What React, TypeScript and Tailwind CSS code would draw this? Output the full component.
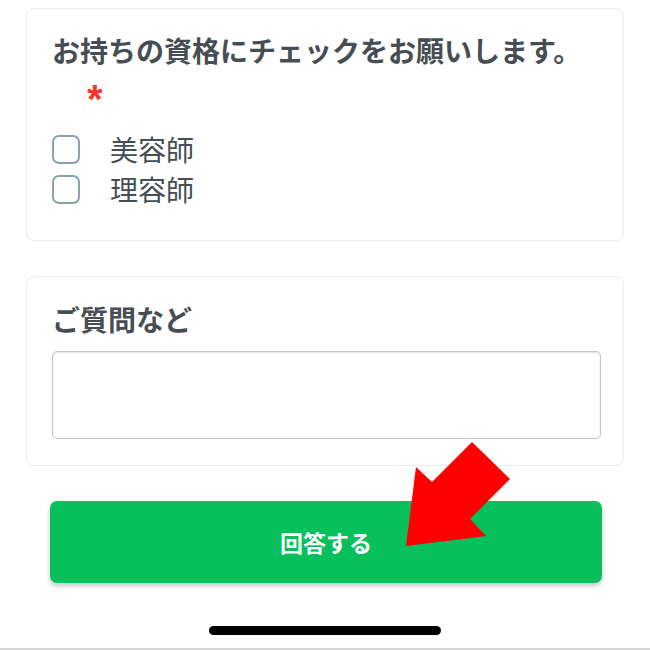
import React from 'react';

// ============================================================================
// Parts
// ============================================================================

function CheckRow({ label }: { label: string }) {
  return (
    <label className="flex items-center h-[40px]">
      <span className="w-[28px] h-[29px] rounded-[7px] border-2 border-[#8aa3aa] bg-white shrink-0" />
      <span className="ml-[30px] text-[28px] leading-[40px] text-[#464e53]">{label}</span>
    </label>
  );
}

function Arrow() {
  return (
    <svg
      className="absolute left-0 top-0 pointer-events-none"
      width="650"
      height="650"
      viewBox="0 0 650 650"
    >
      <polygon
        points="406,546 416,467 432,482 472,442 510,479 470,519 486,536"
        fill="#ff0000"
      />
    </svg>
  );
}

// ============================================================================
// App
// ============================================================================

export default function App() {
  return (
    <div
      className="relative w-[650px] h-[650px] bg-white overflow-hidden flex flex-col"
      style={{ fontFamily: '"Noto Sans CJK JP", "Noto Sans", sans-serif' }}
    >
      <div className="pt-[8px] px-[26px]">
        {/* Question 1 */}
        <div className="rounded-[8px] border border-[#ebebeb] pt-[23px] pb-[31px] px-[25px]">
          <h2 className="text-[28px] font-bold leading-[36px] text-[#464e53]">
            お持ちの資格にチェックをお願いします。
          </h2>
          <div
            className="ml-[35px] mt-[11px] h-[30px] text-[40px] leading-[40px] font-bold text-[#f2382c]"
            style={{ fontFamily: '"Liberation Sans", sans-serif' }}
          >
            *
          </div>
          <div className="mt-[20px] flex flex-col">
            <CheckRow label="美容師" />
            <CheckRow label="理容師" />
          </div>
        </div>

        {/* Question 2 */}
        <div className="mt-[35px] rounded-[8px] border border-[#ebebeb] pt-[24px] pb-[26px] px-[25px]">
          <h2 className="text-[28px] font-bold leading-[36px] text-[#464e53]">ご質問など</h2>
          <div className="mt-[14px] h-[88px] w-[549px] rounded-[5px] border-[1.5px] border-[#c4c4c4] bg-white shadow-[inset_0_1px_2px_rgba(0,0,0,0.12)]" />
        </div>
      </div>

      {/* Submit */}
      <div className="px-[50px] mt-[35px]">
        <button className="w-[552px] h-[82px] rounded-[7px] bg-[#07bf5b] text-white text-[23px] font-bold shadow-[0_3px_5px_rgba(0,0,0,0.22)]">
          回答する
        </button>
      </div>

      {/* Home indicator */}
      <div className="mt-auto flex justify-center pb-[13px]">
        <div className="w-[232px] h-[9px] rounded-full bg-black" />
      </div>
      <div className="h-[2px] bg-[#d6d6d6]" />

      <Arrow />
    </div>
  );
}
